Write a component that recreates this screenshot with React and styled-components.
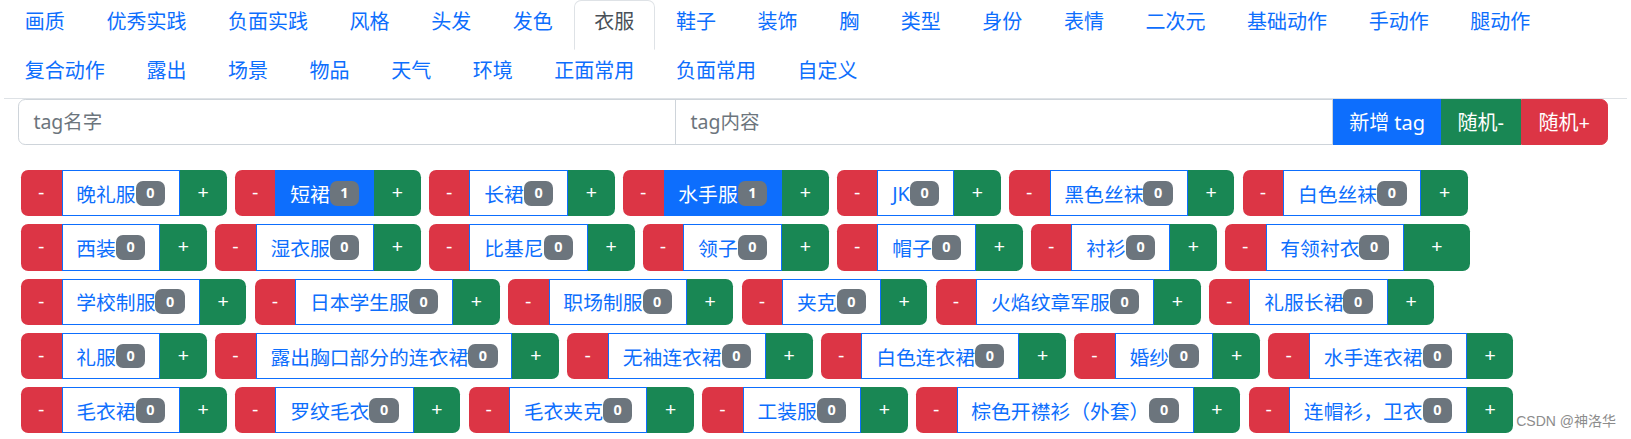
import React from 'react';
import styled, { createGlobalStyle, css } from 'styled-components';

const GlobalStyle = createGlobalStyle`
  html, body { margin: 0; padding: 0; background: #fff; }
  body { font-family: "Noto Sans", "Noto Sans CJK SC", sans-serif; }
  * { box-sizing: border-box; }
`;

const Page = styled.div`
  position: relative;
  width: 1631px;
  height: 439px;
  overflow: hidden;
  padding: 0 4px;
`;

const Tabs = styled.ul`
  display: flex;
  flex-wrap: wrap;
  list-style: none;
  margin: 0;
  padding: 0;
  border-bottom: 1px solid #dee2e6;
`;

const TabItem = styled.li`
  margin-bottom: -1px;
`;

const TabLink = styled.a`
  display: block;
  padding: 7.1px 19.8px 12.1px;
  font-size: 20px;
  line-height: 28.8px;
  color: #0d6efd;
  text-decoration: none;
  border: 1px solid transparent;
  border-top-left-radius: 7.2px;
  border-top-right-radius: 7.2px;
  ${p => p.$active && css`
    color: #495057;
    background: #fff;
    border-color: #dee2e6 #dee2e6 #fff;
  `}
`;

const Content = styled.div`
  margin: 0 19px 0 14px;
`;

const InputGroup = styled.div`
  display: flex;
  height: 46px;
`;

const Input = styled.input`
  flex: 1 1 0;
  min-width: 0;
  height: 46px;
  margin: 0;
  padding: 7.2px 14.4px;
  font-family: "Noto Sans", "Noto Sans CJK SC", sans-serif;
  font-size: 19.5px;
  color: #212529;
  border: 1px solid #ced4da;
  background: #fff;
  outline: none;
  &::placeholder { color: #6c757d; }
  &:first-child { border-radius: 7.2px 0 0 7.2px; }
  & + & { margin-left: -1px; }
`;

const ActionButton = styled.button`
  height: 46px;
  padding: 0 ${p => p.$pad || '15.5px'};
  margin: 0;
  font-family: "Noto Sans", "Noto Sans CJK SC", sans-serif;
  font-size: 20px;
  color: #fff;
  border: 1px solid ${p => p.$bg};
  background: ${p => p.$bg};
  white-space: nowrap;
  &:last-child { border-radius: 0 7.2px 7.2px 0; }
`;

const TagList = styled.div`
  display: flex;
  flex-wrap: wrap;
  gap: 7.9px 8.3px;
  margin: 25px 0 0 3px;
`;

const TagGroup = styled.div`
  display: inline-flex;
  height: 46.4px;
`;

const SideButton = styled.div`
  display: flex;
  align-items: center;
  justify-content: center;
  width: ${p => (p.$kind === 'minus' ? '40.5px' : p.$wide ? '66.5px' : '46.7px')};
  font-family: "Liberation Sans", sans-serif;
  font-size: 19.2px;
  color: #fff;
  background: ${p => (p.$kind === 'minus' ? '#dc3545' : '#198754')};
  border-radius: ${p => (p.$kind === 'minus' ? '7.2px 0 0 7.2px' : '0 7.2px 7.2px 0')};
`;

const TagName = styled.div`
  display: flex;
  align-items: center;
  padding: 0 13.8px;
  font-size: 19.8px;
  white-space: nowrap;
  border: 1px solid #0d6efd;
  color: ${p => (p.$active ? '#fff' : '#0d6efd')};
  background: ${p => (p.$active ? '#0d6efd' : '#fff')};
`;

const Badge = styled.span`
  display: inline-block;
  padding: 5.2px 10.6px;
  font-family: "Noto Sans", sans-serif;
  font-size: 14.4px;
  font-weight: 700;
  line-height: 1;
  color: #fff;
  background: #6c757d;
  border-radius: 7px;
`;

const Watermark = styled.div`
  position: absolute;
  right: 15px;
  bottom: 9px;
  font-family: "Liberation Sans", "Noto Sans CJK SC", sans-serif;
  font-size: 14px;
  color: #8c8c8c;
  text-shadow: 0 0 2px #fff;
  white-space: nowrap;
`;

const tabs = [
  '画质', '优秀实践', '负面实践', '风格', '头发', '发色', '衣服', '鞋子', '装饰', '胸',
  '类型', '身份', '表情', '二次元', '基础动作', '手动作', '腿动作', '复合动作', '露出',
  '场景', '物品', '天气', '环境', '正面常用', '负面常用', '自定义',
];

const tags = [
  ['晚礼服', 0], ['短裙', 1, true], ['长裙', 0], ['水手服', 1, true], ['JK', 0], ['黑色丝袜', 0], ['白色丝袜', 0],
  ['西装', 0], ['湿衣服', 0], ['比基尼', 0], ['领子', 0], ['帽子', 0], ['衬衫', 0], ['有领衬衣', 0, false, true],
  ['学校制服', 0], ['日本学生服', 0], ['职场制服', 0], ['夹克', 0], ['火焰纹章军服', 0], ['礼服长裙', 0],
  ['礼服', 0], ['露出胸口部分的连衣裙', 0], ['无袖连衣裙', 0], ['白色连衣裙', 0], ['婚纱', 0], ['水手连衣裙', 0],
  ['毛衣裙', 0], ['罗纹毛衣', 0], ['毛衣夹克', 0], ['工装服', 0], ['棕色开襟衫（外套）', 0], ['连帽衫，卫衣', 0],
];

export default function App() {
  return (
    <Page>
      <GlobalStyle />
      <Tabs>
        {tabs.map(t => (
          <TabItem key={t}>
            <TabLink href="#" $active={t === '衣服'}>{t}</TabLink>
          </TabItem>
        ))}
      </Tabs>
      <Content>
        <InputGroup>
          <Input placeholder="tag名字" />
          <Input placeholder="tag内容" />
          <ActionButton $bg="#0d6efd" $pad="15px">新增 tag</ActionButton>
          <ActionButton $bg="#198754">随机-</ActionButton>
          <ActionButton $bg="#dc3545" $pad="17px">随机+</ActionButton>
        </InputGroup>
        <TagList>
          {tags.map(([name, count, active, wide]) => (
            <TagGroup key={name}>
              <SideButton $kind="minus">-</SideButton>
              <TagName $active={active}>
                {name}
                <Badge>{count}</Badge>
              </TagName>
              <SideButton $kind="plus" $wide={wide}>+</SideButton>
            </TagGroup>
          ))}
        </TagList>
      </Content>
      <Watermark>CSDN @神洛华</Watermark>
    </Page>
  );
}
